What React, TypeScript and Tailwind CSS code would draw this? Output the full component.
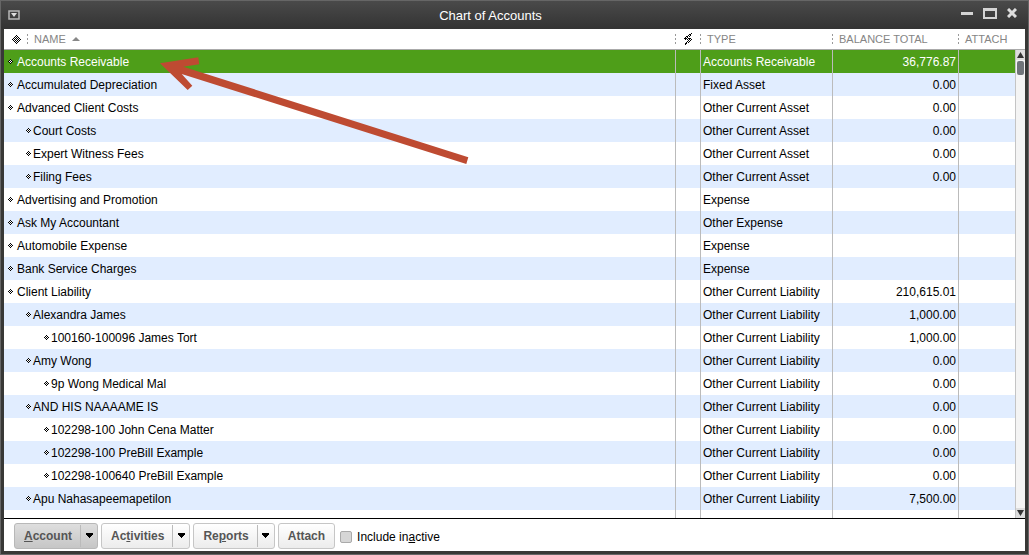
type Account = {
  name: string;
  level: number;
  type: string;
  balance?: string;
};

const accounts: Account[] = [
  { name: "Accounts Receivable", level: 0, type: "Accounts Receivable", balance: "36,776.87" },
  { name: "Accumulated Depreciation", level: 0, type: "Fixed Asset", balance: "0.00" },
  { name: "Advanced Client Costs", level: 0, type: "Other Current Asset", balance: "0.00" },
  { name: "Court Costs", level: 1, type: "Other Current Asset", balance: "0.00" },
  { name: "Expert Witness Fees", level: 1, type: "Other Current Asset", balance: "0.00" },
  { name: "Filing Fees", level: 1, type: "Other Current Asset", balance: "0.00" },
  { name: "Advertising and Promotion", level: 0, type: "Expense" },
  { name: "Ask My Accountant", level: 0, type: "Other Expense" },
  { name: "Automobile Expense", level: 0, type: "Expense" },
  { name: "Bank Service Charges", level: 0, type: "Expense" },
  { name: "Client Liability", level: 0, type: "Other Current Liability", balance: "210,615.01" },
  { name: "Alexandra James", level: 1, type: "Other Current Liability", balance: "1,000.00" },
  { name: "100160-100096 James Tort", level: 2, type: "Other Current Liability", balance: "1,000.00" },
  { name: "Amy Wong", level: 1, type: "Other Current Liability", balance: "0.00" },
  { name: "9p Wong Medical Mal", level: 2, type: "Other Current Liability", balance: "0.00" },
  { name: "AND HIS NAAAAME IS", level: 1, type: "Other Current Liability", balance: "0.00" },
  { name: "102298-100 John Cena Matter", level: 2, type: "Other Current Liability", balance: "0.00" },
  { name: "102298-100 PreBill Example", level: 2, type: "Other Current Liability", balance: "0.00" },
  { name: "102298-100640 PreBill Example", level: 2, type: "Other Current Liability", balance: "0.00" },
  { name: "Apu Nahasapeemapetilon", level: 1, type: "Other Current Liability", balance: "7,500.00" },
];

const indents = ["pl-1", "pl-[22px]", "pl-10"];

function Diamond() {
  return (
    <svg width="5" height="5" viewBox="0 0 5 5" shapeRendering="crispEdges" className="shrink-0">
      <path d="M2 1h1v1h-1zM1 2h1v1h-1zM3 2h1v1h-1zM2 3h1v1h-1z" fill="#fff" />
      <path d="M2 0h1v1h-1zM1 1h1v1h-1zM3 1h1v1h-1zM0 2h1v1h-1zM2 2h1v1h-1zM4 2h1v1h-1zM1 3h1v1h-1zM3 3h1v1h-1zM2 4h1v1h-1z" fill="#000" />
    </svg>
  );
}

// Column separator in the header row
function Grip() {
  return (
    <svg width="1" height="10" viewBox="0 0 1 10" shapeRendering="crispEdges" className="shrink-0">
      <path d="M0 0h1v2h-1zM0 4h1v2h-1zM0 8h1v2h-1z" fill="#999" />
    </svg>
  );
}

function MenuButton({ before, hotkey, after, active }: { before: string; hotkey: string; after: string; active?: boolean }) {
  return (
    <div
      className={`flex h-[26px] rounded-[3px] border ${
        active ? "border-[#b8b8b8] bg-linear-to-b from-[#dedede] to-[#c6c6c6]" : "border-[#c6c6c6] bg-linear-to-b from-white to-[#ececec]"
      }`}
    >
      <button type="button" className="pr-2 pl-[9px] text-xs font-bold text-[#555]">
        {before}
        <u>{hotkey}</u>
        {after}
      </button>
      <button type="button" aria-label={`${before}${hotkey}${after} menu`} className="my-px flex w-[17px] items-center justify-center border-l border-[#bbb]">
        <svg width="7" height="5" viewBox="0 0 7 5" shapeRendering="crispEdges">
          <path d="M0 0h7v2h-1v1h-1v1h-1v1h-1v-1h-1v-1h-1v-1h-1z" fill="#000" />
        </svg>
      </button>
    </div>
  );
}

export default function App() {
  return (
    <div className="flex min-h-screen flex-col border-x border-b border-[#666] font-['Liberation_Sans',Arial,sans-serif] text-xs text-black">
      <div className="relative flex flex-1 flex-col border-x-3 border-b-3 border-[#383836] bg-white">
        {/* Title bar */}
        <header className="-mx-[3px] flex h-[29px] items-center border-t border-[#666] bg-linear-to-b from-[#4a4a4a] to-[#333] pr-[11px] pl-[7px] text-white">
          <button type="button" aria-label="Window menu">
            <svg width="12" height="10" viewBox="0 0 12 10">
              <rect x="1" y="1" width="10" height="8" fill="none" stroke="#b8b8b8" strokeWidth="1.500" />
              <path d="M3 3h6L6 7z" fill="#ddd" />
            </svg>
          </button>
          <h1 className="flex-1 pt-px text-center text-[13px]">Chart of Accounts</h1>
          <div className="flex items-center gap-[10px] pb-1">
            <button type="button" aria-label="Minimize">
              <svg width="12" height="10" viewBox="0 0 12 10">
                <path d="M0 4h12v3H0z" fill="#d4d4d4" />
              </svg>
            </button>
            <button type="button" aria-label="Maximize">
              <svg width="14" height="11" viewBox="0 0 14 11">
                <path d="M0 0h14v11H0zM2 3v6h10V3z" fillRule="evenodd" fill="#d4d4d4" />
              </svg>
            </button>
            <button type="button" aria-label="Close">
              <svg width="10" height="10" viewBox="0 0 10 10">
                <path d="M1 1l8 8M9 1l-8 8" stroke="#ddd" strokeWidth="3" />
              </svg>
            </button>
          </div>
        </header>

        {/* Account list */}
        <div className="flex">
          <table className="w-full table-fixed border-separate border-spacing-0">
            <colgroup>
              <col />
              <col className="w-[25px]" />
              <col className="w-[132px]" />
              <col className="w-[126px]" />
              <col className="w-[57px]" />
            </colgroup>
            <thead>
              <tr className="h-[21px] text-left text-[11px] whitespace-nowrap text-[#858585]">
                <th className="border-b border-[#aaa] p-0 font-normal">
                  <div className="flex items-center pl-2">
                    <svg width="9" height="9" viewBox="0 0 9 9" shapeRendering="crispEdges">
                      <path d="M4 0h1v1h-1zM3 1h1v1h-1zM5 1h1v1h-1zM2 2h1v1h-1zM4 2h1v1h-1zM6 2h1v1h-1zM1 3h1v1h-1zM3 3h1v1h-1zM5 3h1v1h-1zM7 3h1v1h-1zM0 4h1v1h-1zM2 4h1v1h-1zM4 4h1v1h-1zM6 4h1v1h-1zM8 4h1v1h-1zM1 5h1v1h-1zM3 5h1v1h-1zM5 5h1v1h-1zM7 5h1v1h-1zM2 6h1v1h-1zM4 6h1v1h-1zM6 6h1v1h-1zM3 7h1v1h-1zM5 7h1v1h-1zM4 8h1v1h-1z" fill="#000" />
                    </svg>
                    <span className="ml-[6px] flex items-center gap-[6px]">
                      <Grip />
                      NAME
                      <svg width="8" height="4" viewBox="0 0 8 4">
                        <path d="M4 0l4 4H0z" fill="#888" />
                      </svg>
                    </span>
                  </div>
                </th>
                <th className="border-b border-[#aaa] p-0 font-normal">
                  <div className="flex items-center gap-2">
                    <Grip />
                    <svg width="8" height="12" viewBox="0 0 8 12" shapeRendering="crispEdges">
                      <path d="M7 0h1v1h-1zM5 1h2v1h-2zM4 2h1v1h-1zM6 2h1v1h-1zM2 3h2v1h-2zM5 3h1v1h-1zM1 4h1v1h-1zM3 4h1v1h-1zM0 5h3v1h-3zM4 5h3v1h-3zM1 6h1v1h-1zM3 6h1v1h-1zM5 6h1v1h-1zM7 6h1v1h-1zM4 7h1v1h-1zM6 7h1v1h-1zM3 8h1v1h-1zM5 8h1v1h-1zM2 9h1v1h-1zM4 9h1v1h-1zM1 10h2v1h-2zM1 11h1v1h-1z" fill="#000" />
                    </svg>
                  </div>
                </th>
                <th className="border-b border-[#aaa] p-0 font-normal">
                  <div className="flex items-center gap-[6px]"><Grip />TYPE</div>
                </th>
                <th className="border-b border-[#aaa] p-0 font-normal">
                  <div className="flex items-center gap-[6px]"><Grip />BALANCE TOTAL</div>
                </th>
                <th className="border-b border-[#aaa] p-0 font-normal">
                  <div className="flex items-center gap-[6px]"><Grip />ATTACH</div>
                </th>
              </tr>
            </thead>
            <tbody>
              {accounts.map((account, i) => (
                <tr key={account.name} className={`h-[23px] ${i === 0 ? "bg-[#4e9e19] text-white" : i % 2 ? "bg-[#e1edff]" : ""}`}>
                  <td className={`p-0 ${indents[account.level]}`}>
                    <div className={`flex items-center ${account.level ? "gap-[2px]" : "gap-1"}`}>
                      <Diamond />
                      {account.name}
                    </div>
                  </td>
                  <td className="border-l border-[#bbb] p-0" />
                  <td className="border-l border-[#bbb] p-0 pl-[2px] whitespace-nowrap">{account.type}</td>
                  <td className="border-l border-[#bbb] p-0 pr-[2px] text-right">{account.balance}</td>
                  <td className="border-l border-[#bbb] p-0" />
                </tr>
              ))}
              <tr className="h-2">
                <td className="p-0" />
                <td className="border-l border-[#bbb] p-0" />
                <td className="border-l border-[#bbb] p-0" />
                <td className="border-l border-[#bbb] p-0" />
                <td className="border-l border-[#bbb] p-0" />
              </tr>
            </tbody>
          </table>

          {/* Scrollbar */}
          <div className="flex w-[10px] shrink-0 flex-col">
            <div className="h-[21px] border-b border-[#aaa]" />
            <div className="flex flex-1 flex-col items-center border-l border-[#c4c4c4] bg-[#f4f4f4]">
              <div className="flex h-[10px] w-full items-center justify-center bg-[#ddd]">
                <svg width="7" height="6" viewBox="0 0 7 6"><path d="M3.500 0L7 6H0z" fill="#333" /></svg>
              </div>
              <div className="mt-px h-[14px] w-[7px] rounded-[2px] bg-[#70757a]" />
              <div className="mt-auto flex h-[10px] w-full items-center justify-center bg-[#ddd]">
                <svg width="7" height="6" viewBox="0 0 7 6"><path d="M0 0h7L3.500 6z" fill="#333" /></svg>
              </div>
            </div>
          </div>
        </div>

        {/* Actions */}
        <footer className="flex flex-1 items-center gap-[3px] border-t border-black pt-px pl-[10px]">
          <MenuButton before="" hotkey="A" after="ccount" active />
          <MenuButton before="Ac" hotkey="t" after="ivities" />
          <MenuButton before="Re" hotkey="p" after="orts" />
          <button type="button" className="h-[26px] rounded-[3px] border border-[#c6c6c6] bg-linear-to-b from-white to-[#ececec] px-[9px] font-bold text-[#555]">
            Attach
          </button>
          <label className="ml-[2px] flex items-center gap-[5px] pt-[3px]">
            <input type="checkbox" className="size-3 appearance-none rounded-[2px] border border-[#aaa] bg-[#d6d6d6]" />
            <span>
              Include in<u>a</u>ctive
            </span>
          </label>
        </footer>

        {/* Arrow pointing at the selected account */}
        <svg width="310" height="110" viewBox="160 56 310 110" className="pointer-events-none absolute top-14 left-[156px]">
          <path d="M160 63.300L198.300 57.300L199.200 64.300L183.300 66.700L468.300 157.300L466.300 164L181.700 74L192.300 85.700L187.700 90z" fill="#be4b32" />
        </svg>
      </div>
    </div>
  );
}
